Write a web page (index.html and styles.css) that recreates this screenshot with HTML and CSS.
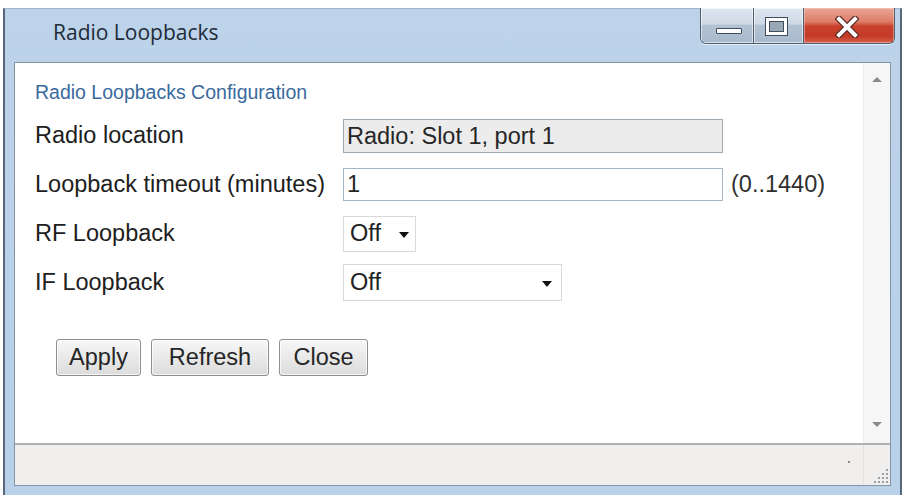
FILE: index.html
```html
<!DOCTYPE html>
<html>
<head>
<meta charset="utf-8">
<title>Radio Loopbacks</title>
<link rel="stylesheet" href="styles.css">
</head>
<body>
<div class="window">
  <div class="titlebar">
    <div class="title">Radio Loopbacks</div>
    <div class="caption-buttons">
      <div class="cb cb-min"><span class="min-glyph"></span></div>
      <div class="cb cb-max"><span class="max-glyph"></span></div>
      <div class="cb cb-close">
        <svg class="close-glyph" width="24" height="22" viewBox="0 0 24 22">
          <path d="M4 3 L20 19 M20 3 L4 19" stroke="#5a2a22" stroke-width="6.5" stroke-linecap="square" fill="none"/>
          <path d="M4 3 L20 19 M20 3 L4 19" stroke="#ffffff" stroke-width="4" stroke-linecap="square" fill="none"/>
        </svg>
      </div>
    </div>
  </div>
  <div class="panel">
    <div class="main">
      <div class="content">
        <div class="section-title">Radio Loopbacks Configuration</div>
        <div class="form">
          <div class="row">
            <div class="label">Radio location</div>
            <div class="field readonly w-wide">Radio: Slot 1, port 1</div>
          </div>
          <div class="row">
            <div class="label">Loopback timeout (minutes)</div>
            <div class="field editable w-wide">1</div>
            <div class="hint">(0..1440)</div>
          </div>
          <div class="row">
            <div class="label">RF Loopback</div>
            <div class="select sel-rf"><span>Off</span><span class="caret"></span></div>
          </div>
          <div class="row">
            <div class="label">IF Loopback</div>
            <div class="select sel-if"><span>Off</span><span class="caret"></span></div>
          </div>
        </div>
        <div class="buttons">
          <button class="btn btn-apply">Apply</button>
          <button class="btn btn-refresh">Refresh</button>
          <button class="btn btn-close">Close</button>
        </div>
      </div>
      <div class="scrollbar">
        <span class="arrow arrow-up"></span>
        <span class="arrow arrow-down"></span>
      </div>
    </div>
    <div class="statusbar">
      <div class="status-main"><span class="status-dot"></span></div>
      <div class="status-grip">
        <svg width="16" height="16" viewBox="0 0 16 16">
          <rect x="13" y="1" width="2" height="2" fill="#9aa0a6"/>
          <rect x="9" y="5" width="2" height="2" fill="#9aa0a6"/>
          <rect x="13" y="5" width="2" height="2" fill="#9aa0a6"/>
          <rect x="5" y="9" width="2" height="2" fill="#9aa0a6"/>
          <rect x="9" y="9" width="2" height="2" fill="#9aa0a6"/>
          <rect x="13" y="9" width="2" height="2" fill="#9aa0a6"/>
          <rect x="1" y="13" width="2" height="2" fill="#9aa0a6"/>
          <rect x="5" y="13" width="2" height="2" fill="#9aa0a6"/>
          <rect x="9" y="13" width="2" height="2" fill="#9aa0a6"/>
          <rect x="13" y="13" width="2" height="2" fill="#9aa0a6"/>
        </svg>
      </div>
    </div>
  </div>
</div>
</body>
</html>
```

FILE: styles.css
```css
html, body {
  margin: 0;
  height: 495px;
  overflow: hidden;
  background: #ffffff;
}

body {
  padding: 8px 0 0 3px;
  box-sizing: border-box;
}

.window {
  width: 899px;
  height: 500px;
  box-sizing: border-box;
  border-left: 2px solid #56677a;
  border-right: 2px solid #56677a;
  border-top: 1px solid #9fb5cb;
  background: linear-gradient(#bcd3ea, #b8d0e8);
}

.titlebar {
  height: 53px;
  display: flex;
  justify-content: space-between;
  align-items: flex-start;
}

.title {
  font-family: "Open Sans", "Noto Sans", sans-serif;
  font-size: 21px;
  line-height: 28px;
  color: #1f2b38;
  padding: 9px 0 0 48px;
}

.caption-buttons {
  display: flex;
  margin-right: 5px;
  margin-top: -1px;
  height: 35px;
  border: 1px solid #4f5f72;
  border-top: none;
  border-radius: 0 0 6px 6px;
  overflow: hidden;
  box-shadow: 0 1px 0 rgba(255,255,255,0.6);
}

.cb {
  height: 35px;
  box-sizing: border-box;
  display: flex;
  align-items: center;
  justify-content: center;
  position: relative;
}

.cb-min, .cb-max {
  width: 53px;
  background: linear-gradient(#dfe7f0 0%, #cfdae6 45%, #b3c2d3 50%, #a9bacc 100%);
  box-shadow: inset 0 0 0 1px rgba(255,255,255,0.55);
}

.cb-min {
  border-right: 1px solid #4f5f72;
}

.cb-max {
  width: 50px;
  border-right: 1px solid #4f5f72;
}

.cb-close {
  width: 90px;
  background: linear-gradient(#eaa797 0%, #dd7a66 40%, #c8402c 52%, #c53a27 80%, #d3604a 100%);
  box-shadow: inset 0 0 0 1px rgba(255,220,210,0.45);
}

.min-glyph {
  width: 24px;
  height: 4px;
  background: #ffffff;
  border: 1px solid #3f4c5c;
  border-radius: 1px;
  margin-top: 11px;
  margin-left: 3px;
}

.max-glyph {
  width: 15px;
  height: 11px;
  border: 3px solid #ffffff;
  outline: 1px solid #3f4c5c;
  background: #9aa7b5;
  box-shadow: inset 0 0 0 1px #3f4c5c;
  margin-top: 2px;
  margin-right: 4px;
}

.close-glyph {
  margin-top: 2px;
  margin-right: 4px;
}

.panel {
  margin: 0 9px;
  height: 424px;
  box-sizing: border-box;
  border: 1px solid #8394a8;
  background: #ffffff;
  display: flex;
  flex-direction: column;
}

.main {
  height: 380px;
  display: flex;
}

.content {
  flex: 1;
  padding: 18px 0 0 20px;
  font-family: "Liberation Sans", Arial, sans-serif;
  color: #222222;
}

.section-title {
  font-size: 19.5px;
  line-height: 22px;
  color: #3a6a9e;
  margin-bottom: 8px;
}

.row {
  height: 49px;
  display: flex;
  align-items: center;
  font-size: 23.5px;
}

.label {
  width: 308px;
  flex: none;
  color: #202020;
}

.field {
  box-sizing: border-box;
  height: 34px;
  line-height: 32px;
  padding-left: 3px;
  color: #262626;
}

.w-wide {
  width: 380px;
}

.readonly {
  background: #ececec;
  border: 1px solid #9ea8b1;
}

.editable {
  background: #ffffff;
  border: 1px solid #a5b5c3;
  height: 33px;
  line-height: 31px;
}

.hint {
  margin-left: 8px;
  color: #303030;
}

.select {
  box-sizing: border-box;
  height: 36px;
  border: 1px solid #d9d9d9;
  background: #ffffff;
  display: flex;
  align-items: center;
  justify-content: space-between;
  padding: 0 6px 0 6px;
  color: #222222;
}

.sel-rf {
  width: 73px;
}

.sel-if {
  width: 219px;
  height: 37px;
  padding-right: 9px;
}

.caret {
  width: 0;
  height: 0;
  border-left: 5.5px solid transparent;
  border-right: 5.5px solid transparent;
  border-top: 6px solid #111111;
  margin-top: 2px;
}

.buttons {
  display: flex;
  gap: 10px;
  margin: 32px 0 0 21px;
}

.btn {
  height: 37px;
  box-sizing: border-box;
  border: 1px solid #8f8f8f;
  border-radius: 3px;
  background: linear-gradient(#f7f7f7, #e9e9e9 50%, #dcdcdc);
  box-shadow: inset 0 0 0 1px rgba(255,255,255,0.7);
  font-family: "Liberation Sans", Arial, sans-serif;
  font-size: 23.5px;
  color: #262626;
  padding: 0;
  margin: 0;
}

.btn-apply { width: 85px; }
.btn-refresh { width: 118px; }
.btn-close { width: 89px; }

.scrollbar {
  width: 27px;
  border-left: 1px solid #ebebeb;
  background: #f6f6f6;
  display: flex;
  flex-direction: column;
  justify-content: space-between;
  align-items: center;
  padding: 14px 0 16px;
  box-sizing: border-box;
}

.arrow {
  width: 0;
  height: 0;
  border-left: 5px solid transparent;
  border-right: 5px solid transparent;
}

.arrow-up {
  border-bottom: 5px solid #8a8a8a;
}

.arrow-down {
  border-top: 5px solid #8a8a8a;
}

.statusbar {
  flex: 1;
  border-top: 2px solid #b1b1b1;
  background: #f1efed;
  display: flex;
}

.status-main {
  flex: 1;
  position: relative;
}

.status-dot {
  position: absolute;
  right: 13px;
  top: 16px;
  width: 2px;
  height: 2px;
  background: #8a8a8a;
}

.status-grip {
  width: 27px;
  border-left: 1px solid #e4e2e0;
  display: flex;
  align-items: flex-end;
  justify-content: flex-end;
  padding: 0 1px 1px 0;
  box-sizing: border-box;
}
```
